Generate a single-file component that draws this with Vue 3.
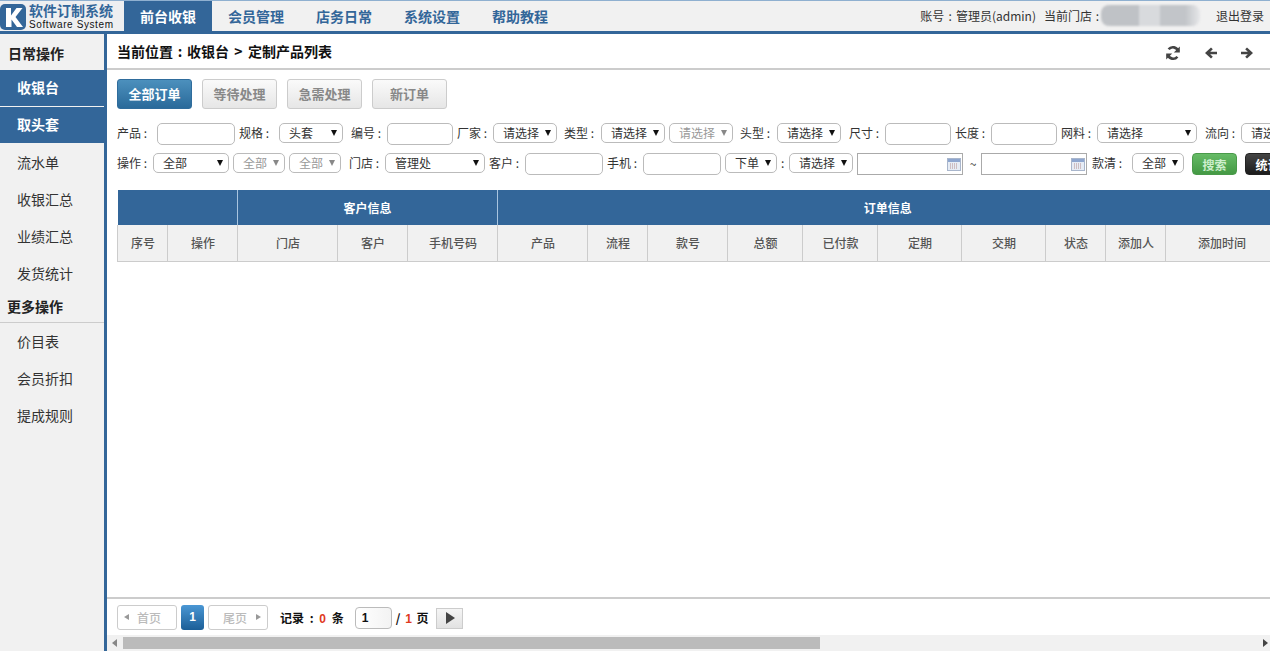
<script setup>
const navs = ['前台收银', '会员管理', '店务日常', '系统设置', '帮助教程']
const tabs = ['全部订单', '等待处理', '急需处理', '新订单']
const row1 = [
  { t: 'l', v: '产品', w: 34, m: 0 }, { t: 'i', w: 78, m: 6 },
  { t: 'l', v: '规格', w: 34, m: 4 }, { t: 's', v: '头套', w: 64, m: 6 },
  { t: 'l', v: '编号', w: 34, m: 8 }, { t: 'i', w: 66, m: 2 },
  { t: 'l', v: '厂家', w: 34, m: 4 }, { t: 's', v: '请选择', w: 64, m: 2 },
  { t: 'l', v: '类型', w: 34, m: 7 }, { t: 's', v: '请选择', w: 64, m: 3 },
  { t: 's', v: '请选择', w: 64, m: 4, d: true },
  { t: 'l', v: '头型', w: 34, m: 7 }, { t: 's', v: '请选择', w: 64, m: 3 },
  { t: 'l', v: '尺寸', w: 34, m: 8 }, { t: 'i', w: 66, m: 2 },
  { t: 'l', v: '长度', w: 34, m: 4 }, { t: 'i', w: 66, m: 2 },
  { t: 'l', v: '网料', w: 34, m: 4 }, { t: 's', v: '请选择', w: 100, m: 2 },
  { t: 'l', v: '流向', w: 34, m: 8 }, { t: 's', v: '请选择', w: 64, m: 2 }
]
const row2 = [
  { t: 'l', v: '操作', w: 34, m: 0 }, { t: 's', v: '全部', w: 76, m: 2 },
  { t: 's', v: '全部', w: 52, m: 4, d: true }, { t: 's', v: '全部', w: 52, m: 4, d: true },
  { t: 'l', v: '门店', w: 34, m: 8 }, { t: 's', v: '管理处', w: 100, m: 2 },
  { t: 'l', v: '客户', w: 34, m: 4 }, { t: 'i', w: 78, m: 2 },
  { t: 'l', v: '手机', w: 34, m: 4 }, { t: 'i', w: 78, m: 2 },
  { t: 's', v: '下单', w: 52, m: 4 }, { t: 'c', w: 8, m: 4 },
  { t: 's', v: '请选择', w: 64, m: 0 },
  { t: 'd', w: 106, m: 4 }, { t: 'x', w: 16, m: 2 }, { t: 'd', w: 106, m: 0 },
  { t: 'l', v: '款清', w: 34, m: 5 }, { t: 's', v: '全部', w: 52, m: 6 },
  { t: 'b', v: '搜索', w: 45, m: 8, k: 'green' }, { t: 'b', v: '统计', w: 45, m: 8, k: 'black' }
]
const rows = [row1, row2]
const cols = [
  ['序号', 50], ['操作', 70], ['门店', 100], ['客户', 70], ['手机号码', 90], ['产品', 90], ['流程', 60],
  ['款号', 80], ['总额', 75], ['已付款', 75], ['定期', 84], ['交期', 84], ['状态', 60], ['添加人', 60], ['添加时间', 112]
]
const menuA = ['流水单', '收银汇总', '业绩汇总', '发货统计']
const menuB = ['价目表', '会员折扣', '提成规则']
</script>

<template>
  <div class="page">
    <header class="top">
      <div class="logo">
        <svg class="logo-k" viewBox="0 0 26 26" width="26" height="26">
          <rect width="26" height="26" rx="5" fill="#336699" />
          <path d="M6 4h5v7.500L16.500 4h6l-7 9 7.500 10h-6l-5.500-7.500V23H6z" fill="#fff" />
        </svg>
        <div class="logo-txt">
          <div class="logo-cn">软件订制系统</div>
          <div class="logo-en">Software System</div>
        </div>
      </div>
      <nav class="nav">
        <a v-for="(n, i) in navs" :key="n" class="nav-item" :class="{ on: i === 0 }">{{ n }}</a>
      </nav>
      <div class="user">
        <span class="acct">账号 : 管理员(admin)</span>
        <span class="store">当前门店 :</span>
        <span class="blur"></span>
        <span class="logout">退出登录</span>
      </div>
    </header>

    <div class="body">
      <aside class="side">
        <div class="side-title first">日常操作</div>
        <div class="side-item act">收银台</div>
        <div class="side-item act sec">取头套</div>
        <div v-for="m in menuA" :key="m" class="side-item">{{ m }}</div>
        <div class="side-title more">更多操作</div>
        <div v-for="m in menuB" :key="m" class="side-item low">{{ m }}</div>
      </aside>

      <main class="main">
        <div class="crumb">
          <span class="crumb-txt">当前位置<span class="colon">:</span>收银台<span class="gt">&gt;</span>定制产品列表</span>
          <div class="tools">
            <svg class="refresh" viewBox="0 0 16 16" width="16" height="16">
              <path d="M13.200 6.400A5.500 5.500 0 0 0 3.600 4.300" fill="none" stroke="#444" stroke-width="2.600" />
              <path d="M14.800 1.500V7.600H8.800z" fill="#444" />
              <path d="M2.800 9.600A5.500 5.500 0 0 0 12.400 11.700" fill="none" stroke="#444" stroke-width="2.600" />
              <path d="M1.200 14.500V8.400H7.200z" fill="#444" />
            </svg>
            <svg viewBox="0 0 14 14" width="14" height="14">
              <path d="M7 1.500L1 7l6 5.500 1.800-1.800L6.200 8.300H13V5.700H6.200l2.600-2.400z" fill="#444" />
            </svg>
            <svg viewBox="0 0 14 14" width="14" height="14">
              <path d="M7 1.500L13 7l-6 5.500-1.800-1.800 2.600-2.400H1V5.700h6.800L5.200 3.300z" fill="#444" />
            </svg>
          </div>
        </div>

        <div class="content">
          <div class="tabs">
            <button v-for="(t, i) in tabs" :key="t" class="tab" :class="{ on: i === 0 }">{{ t }}</button>
          </div>

          <div class="filters">
            <div v-for="(r, ri) in rows" :key="ri" class="frow">
              <template v-for="(f, fi) in r" :key="fi">
                <label v-if="f.t === 'l'" class="lab" :style="{ width: f.w + 'px', marginLeft: f.m + 'px' }">{{ f.v }} :</label>
                <input v-else-if="f.t === 'i'" class="inp" :style="{ width: f.w + 'px', marginLeft: f.m + 'px' }" />
                <div v-else-if="f.t === 's'" class="sel" :class="{ dis: f.d }" :style="{ width: f.w + 'px', marginLeft: f.m + 'px' }">
                  <span>{{ f.v }}</span><i class="caret"></i>
                </div>
                <span v-else-if="f.t === 'c'" class="lab" :style="{ width: f.w + 'px', marginLeft: f.m + 'px' }">:</span>
                <span v-else-if="f.t === 'x'" class="lab tilde" :style="{ width: f.w + 'px', marginLeft: f.m + 'px' }">~</span>
                <div v-else-if="f.t === 'd'" class="date" :style="{ width: f.w + 'px', marginLeft: f.m + 'px' }">
                  <svg viewBox="0 0 14 13" width="14" height="13">
                    <rect x="0.500" y="0.500" width="13" height="12" fill="#e6ecf5" stroke="#a9b6cc" />
                    <rect x="1" y="1" width="12" height="3" fill="#8ea6cf" />
                    <path d="M3 6h8M3 8h8M3 10h8" stroke="#b58f8f" stroke-dasharray="1 1" />
                  </svg>
                </div>
                <button v-else class="act-btn" :class="f.k" :style="{ width: f.w + 'px', marginLeft: f.m + 'px' }">{{ f.v }}</button>
              </template>
            </div>
          </div>

          <table class="grid">
            <colgroup>
              <col v-for="c in cols" :key="c[0]" :style="{ width: c[1] + 'px' }" />
            </colgroup>
            <thead>
              <tr class="r1">
                <th colspan="2"></th>
                <th colspan="3">客户信息</th>
                <th colspan="10">订单信息</th>
              </tr>
              <tr class="r2">
                <th v-for="c in cols" :key="c[0]">{{ c[0] }}</th>
              </tr>
            </thead>
          </table>
        </div>

        <div class="pager">
          <div class="pg-btn first"><i class="tri-l"></i><span>首页</span></div>
          <div class="pg-cur">1</div>
          <div class="pg-btn last"><span>尾页</span><i class="tri-r"></i></div>
          <span class="rec">记录 : <b class="red">0</b> 条</span>
          <input class="pg-inp" value="1" />
          <span class="tot">/ <b class="red">1</b> 页</span>
          <div class="go"><i class="go-tri"></i></div>
        </div>

        <div class="hbar">
          <i class="hl"></i>
          <div class="thumb"></div>
          <i class="hr"></i>
        </div>
      </main>
    </div>
  </div>
</template>

<style>
html, body { margin: 0; padding: 0; overflow: hidden; background: #fff; }
</style>

<style scoped>
.page {
  width: 1270px; height: 651px; overflow: hidden; display: flex; flex-direction: column;
  font-family: "Noto Sans CJK SC", "Liberation Sans", sans-serif; font-size: 12px; color: #333;
}
.top {
  flex: none; display: flex; align-items: stretch; background: #f1f1f1;
  border-top: 1px solid #8fb0d0; border-bottom: 3px solid #336699; height: 30px;
}
.logo { width: 124px; flex: none; display: flex; align-items: center; background: #eeeff1; }
.logo-k { flex: none; margin-top: 1px; }
.logo-txt { margin-left: 3px; width: 95px; }
.logo-cn { font-size: 14px; font-weight: 700; line-height: 17px; color: #336699; }
.logo-en { font-family: "Liberation Sans", sans-serif; font-size: 10px; line-height: 11px; letter-spacing: 0.600px; color: #111; }
.nav { display: flex; }
.nav-item { width: 88px; text-align: center; line-height: 30px; font-size: 14px; font-weight: 700; color: #336699; }
.nav-item.on { background: #336699; color: #fff; }
.user { margin-left: auto; display: flex; align-items: center; padding: 0 6px 2px 0; color: #333; white-space: nowrap; }
.acct { word-spacing: 1.500px; }
.store { margin-left: 8px; word-spacing: 1px; }
.blur { width: 99px; height: 21px; margin-left: 2px; border-radius: 8px; background: linear-gradient(90deg, #bfc2c6 0 38%, #d8dadd 38% 60%, #c2c5c9 60% 85%, #e6e7e9); filter: blur(1px); }
.logout { margin-left: 16px; }

.body { flex: 1; min-height: 0; display: flex; }
.side { width: 104px; flex: none; background: #f1f1f1; border-right: 3px solid #336699; }
.side-title { padding-left: 8px; font-size: 14px; font-weight: 700; color: #222; }
.side-title.first { height: 36px; line-height: 38px; }
.side-title.more { height: 30px; line-height: 28px; margin-top: 1px; border-bottom: 1px solid #ccc; padding-left: 7px; }
.side-item { height: 37px; line-height: 39px; padding-left: 17px; font-size: 14px; color: #333; }
.side-item.low { line-height: 37px; }
.side-item.act { height: 36px; line-height: 34px; background: #336699; color: #fff; font-weight: 700; }
.side-item.act.sec { margin-top: 1px; }
.main { flex: 1; min-width: 0; display: flex; flex-direction: column; background: #fff; }
.crumb {
  height: 34px; flex: none; display: flex; align-items: center; justify-content: space-between;
  padding: 0 16px 0 10px; border-bottom: 2px solid #ccc;
}
.crumb-txt { font-size: 14px; font-weight: 700; color: #111; display: flex; }
.colon { width: 14px; text-align: center; }
.gt { width: 19px; text-align: center; }
.tools { display: flex; align-items: center; gap: 22px; padding-top: 3px; }
.refresh { margin-right: 1px; }
.content { flex: 1; min-height: 0; overflow: hidden; padding: 9px 0 0 10px; }
.tabs { display: flex; gap: 10px; }
.tab {
  width: 75px; height: 30px; padding: 0 0 2px; box-sizing: border-box; font: inherit; font-size: 13px; font-weight: 700;
  color: #888; border: 1px solid #ccc; border-radius: 3px; background: linear-gradient(#fafafa, #e6e6e6);
}
.tab.on { color: #fff; border-color: #2f6c9c; background: linear-gradient(#4c90bd, #2a6a9a); }
.filters { margin-top: 14px; width: 1300px; }
.frow { display: flex; align-items: flex-start; height: 30px; }
.lab { flex: none; line-height: 20px; white-space: nowrap; color: #333; }
.tilde { text-align: center; line-height: 22px; }
.inp {
  flex: none; height: 22px; box-sizing: border-box; border: 1px solid #bbb; border-radius: 5px; padding: 0; background: #fff; outline: none;
}
.sel {
  flex: none; height: 20px; box-sizing: border-box; border: 1px solid #bbb; border-radius: 5px; display: flex; align-items: center;
  justify-content: space-between; padding: 0 5px 0 9px; color: #333; line-height: 18px; background: #fff;
}
.sel.dis { color: #999; }
.caret { width: 0; height: 0; border: 3.500px solid transparent; border-top: 6px solid #111; border-bottom: 0; }
.sel.dis .caret { border-top-color: #888; }
.date {
  flex: none; height: 22px; box-sizing: border-box; border: 1px solid #aaa; display: flex; align-items: center; justify-content: flex-end; padding-right: 1px; background: #fff;
}
.act-btn {
  flex: none; height: 22px; padding: 0; box-sizing: border-box; font: inherit; font-weight: 700; color: #fff; border-radius: 4px; border: 1px solid #4a9a4a;
}
.act-btn.green { background: linear-gradient(#66bb66, #449944); color: #cdeecd; }
.act-btn.black { background: linear-gradient(#444, #1c1c1c); border-color: #222; }
.grid { table-layout: fixed; border-collapse: collapse; width: 1160px; margin-top: 7px; }
.r1 th { height: 35px; padding: 0; background: #336699; color: #fff; font-weight: 700; border-left: 1px solid #a9c5e0; }
.r1 th:first-child { border-left: 0; }
.r2 th { height: 36px; padding: 0 0 0 1px; background: #f1f1f1; color: #555; font-weight: 500; border: 1px solid #ccc; border-top: 0; box-sizing: border-box; }

.pager {
  height: 38px; flex: none; display: flex; align-items: center; border-top: 2px solid #ccc; padding-left: 10px; box-sizing: border-box; color: #111; font-weight: 700;
}
.pg-btn {
  width: 60px; height: 25px; box-sizing: border-box; border: 1px solid #ccc; border-radius: 3px; display: flex; align-items: center; justify-content: space-between;
  color: #bbb; font-size: 12px; font-weight: 500; background: #fff;
}
.pg-btn.first { padding: 0 15px 0 6px; }
.pg-btn.last { padding: 0 6px 0 14px; }
.pg-cur {
  width: 23px; height: 25px; margin: 0 4px; border-radius: 3px; background: linear-gradient(#4a97d4, #1b5e97); color: #fff; text-align: center; line-height: 25px; font-family: "Liberation Sans", sans-serif;
}
.tri-l { border: 3px solid transparent; border-right: 5px solid #999; border-left: 0; }
.tri-r { border: 3px solid transparent; border-left: 5px solid #999; border-right: 0; }
.rec { margin-left: 12px; word-spacing: 3px; }
.red { color: #e03a1e; font-family: "Liberation Sans", sans-serif; }
.pg-inp {
  width: 37px; height: 22px; margin: 2px 0 0 11px; box-sizing: border-box; border: 1px solid #bbb; border-radius: 4px; padding: 0 0 0 6px; font: 700 12px "Liberation Sans", sans-serif; color: #111; outline: none; background: linear-gradient(90deg, #fff, #f3f3f3);
}
.tot { margin-left: 4px; word-spacing: 2px; }
.go {
  width: 27px; height: 21px; margin: 2px 0 0 7px; box-sizing: border-box; border: 1px solid #ccc; background: linear-gradient(#f5f5f5, #e2e2e2); display: flex; align-items: center; justify-content: center;
}
.go-tri { border: 6px solid transparent; border-left: 9px solid #444; border-right: 0; margin-left: 2px; }
.hbar {
  height: 16px; flex: none; background: #f1f1f1; display: flex; align-items: center;
}
.hl { border: 4px solid transparent; border-right: 5px solid #888; border-left: 0; margin-left: 5px; }
.thumb { width: 697px; height: 12px; margin-left: 6px; background: #bbb; }
.hr { border: 4px solid transparent; border-left: 5px solid #444; border-right: 0; margin-left: auto; margin-right: 2px; }
</style>
